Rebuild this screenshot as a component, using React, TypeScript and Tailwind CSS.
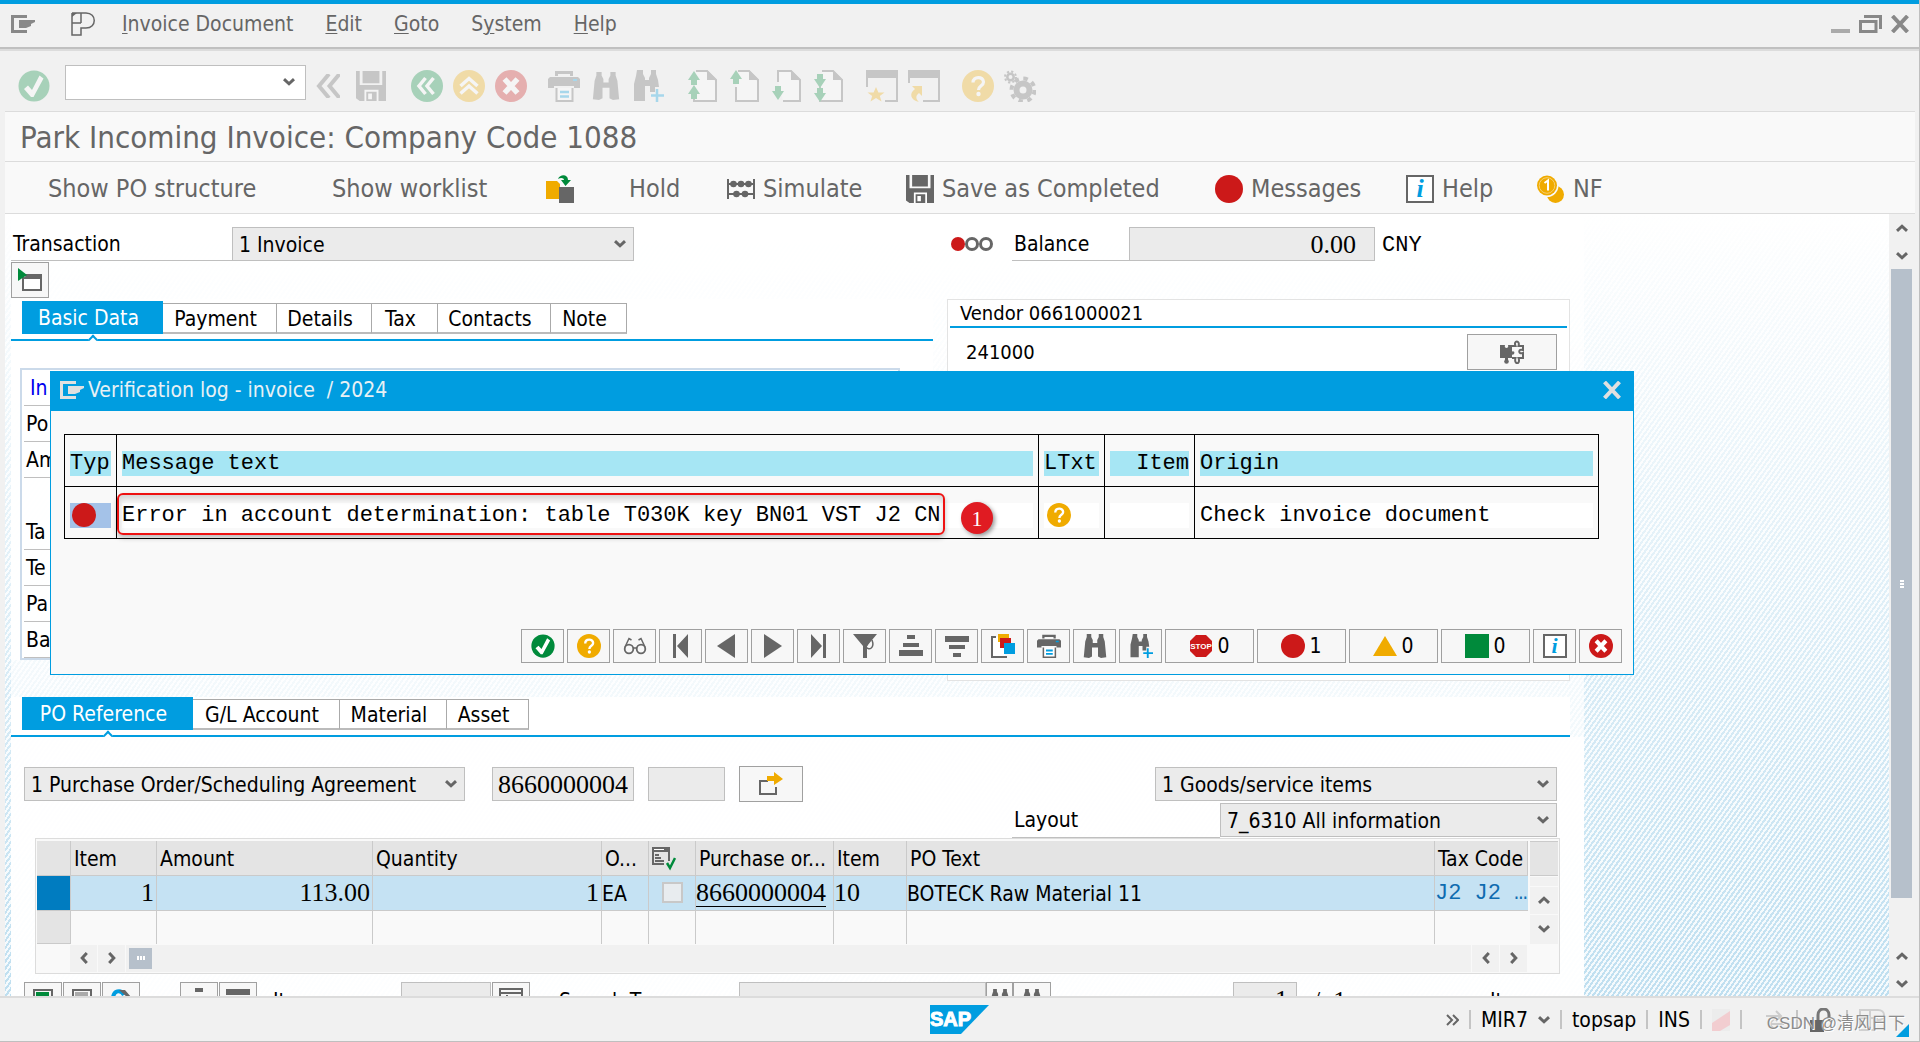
import React from "react";

const SANS = "font-['DejaVu_Sans_Condensed','Noto_Sans',sans-serif]";
const MONO = "font-['Liberation_Mono',monospace]";
const NUM = "font-['Liberation_Serif',serif]";

type IconProps = { className?: string };

function Svg({ className = "size-8", children, box = "0 0 32 32" }: IconProps & { children: React.ReactNode; box?: string }) {
  return (
    <svg viewBox={box} className={`shrink-0 ${className}`} fill="none" aria-hidden="true">
      {children}
    </svg>
  );
}

const G = "#666666";
const GREEN = "#008a3b";
const YELLOW = "#f0ab00";
const RED = "#cc1919";
const BLUE = "#009de0";

const SystemIcon = ({ color, className = "w-6 h-[18px]" }: IconProps & { color: string }) => (
  <Svg className={className} box="0 0 24 18">
    <path d="M16 1.5H1.5V16.5H16" stroke={color} strokeWidth="3" />
    <path d="M8 5H24V7L20 9V11L15 13H8Z" fill={color} />
  </Svg>
);
const PersonasIcon = () => (
  <Svg className="w-6 h-6" box="0 0 24 24">
    <path d="M1 1H15C26 1 26 16 15 16H10V23H1V1M10 1V11M1 11H10" stroke={G} strokeWidth="1.5" />
    <path d="M1 1H6L1 5Z" fill={G} />
  </Svg>
);
const CheckCircle = (p: IconProps) => (
  <Svg {...p}>
    <circle cx="16" cy="16" r="15.5" fill={GREEN} />
    <path d="M6 19L10 15.5L14 20L21.5 5.5L25.5 8.5L15.5 27H13Z" fill="#fff" />
  </Svg>
);
const DoubleLeft = () => (
  <Svg className="w-6 h-6" box="0 0 24 24">
    <path d="M13 0L3 12L13 24M23.5 0L13.5 12L23.5 24" stroke={G} strokeWidth="4" />
  </Svg>
);
const SaveIcon = (p: IconProps) => (
  <Svg {...p}>
    <path d="M0 0H4V15H28V0H32V32H4L0 29ZM7 0H25V13H7Z" fill={G} />
    <path d="M9 20H24V32H9Z" fill="#fff" />
    <path d="M11 22H22V32H11ZM13 24V30H17V24Z" fill={G} fillRule="evenodd" />
  </Svg>
);
const BackCircle = () => (
  <Svg>
    <circle cx="16" cy="16" r="16" fill={GREEN} />
    <path d="M14.5 8L8 16L14.5 24M22.5 8L16 16L22.5 24" stroke="#fff" strokeWidth="3.5" />
  </Svg>
);
const UpCircle = () => (
  <Svg>
    <circle cx="16" cy="16" r="16" fill={YELLOW} />
    <path d="M7.5 16L16 8.5L24.5 16M7.5 23.5L16 16L24.5 23.5" stroke="#fff" strokeWidth="3.5" />
  </Svg>
);
const CancelCircle = (p: IconProps) => (
  <Svg {...p}>
    <circle cx="16" cy="16" r="16" fill={RED} />
    <path d="M9.5 9L22.5 23M22.5 9L9.5 23" stroke="#fff" strokeWidth="5.5" />
  </Svg>
);
const PrinterIcon = (p: IconProps) => (
  <Svg {...p}>
    <path d="M7 6V1H25V6H22V4H10V6Z" fill={G} />
    <path d="M2 7H30L32 9V18H26V16H6V18H0V9Z" fill={G} />
    <rect x="25" y="9" width="4" height="2" fill={BLUE} />
    <path d="M8.500 18V31H24.500V18" stroke={G} strokeWidth="2" fill="#fff" />
    <path d="M12 22H21M12 26.500H21" stroke={BLUE} strokeWidth="2.500" />
  </Svg>
);
const Binoculars = (p: IconProps) => (
  <Svg {...p}>
    <path d="M5 0H11V4L13 8V12H19V8L21 4V0H27V4L29 10L31 31L24 32L20 30V18H12V30L8 32L1 31L3 10L5 4Z" fill={G} />
  </Svg>
);
const BinocularsPlus = (p: IconProps) => (
  <Svg {...p}>
    <path d="M5 0H11V4L13 8V10H17V8L19 4V0H24V4L26 10L27 17H23V22H18V16H13V31H2V14L4 6Z" fill={G} />
    <path d="M25 19V32M19 25.500H32" stroke={BLUE} strokeWidth="2.500" />
  </Svg>
);
const UP = "M6 0L12 9H9V14H3V9H0Z";
const DOWN = "M3 0H9V5H12L6 14L0 5H3Z";
const PageOutline = () => (
  <>
    <path d="M9 1H20L29 10V31H7V17" stroke={G} strokeWidth="2" fill="#fff" />
    <path d="M20 0V10H30Z" fill={G} />
  </>
);
const PageFirst = () => (
  <Svg>
    <PageOutline />
    <path d={UP} transform="translate(1 1)" fill={GREEN} />
    <path d={UP} transform="translate(1 15)" fill={GREEN} />
  </Svg>
);
const PagePrev = () => (
  <Svg>
    <PageOutline />
    <path d={UP} transform="translate(1 0)" fill={GREEN} />
  </Svg>
);
const PageNext = () => (
  <Svg>
    <path d="M7 12V1H20L29 10V31H12" stroke={G} strokeWidth="2" fill="#fff" />
    <path d="M20 0V10H30Z" fill={G} />
    <path d={DOWN} transform="translate(1 16)" fill={GREEN} />
  </Svg>
);
const PageLast = () => (
  <Svg>
    <PageOutline />
    <path d={DOWN} transform="translate(1 4)" fill={GREEN} />
    <path d={DOWN} transform="translate(1 18)" fill={GREEN} />
  </Svg>
);
const NewSession = () => (
  <Svg>
    <path d="M0 0H32V32H19V30H30V8H2V17H0Z" fill={G} />
    <path d="M10 17L12.400 22.500H18.500L13.800 26L15.500 31.500L10 28L4.500 31.500L6.200 26L1.500 22.500H7.600Z" fill={YELLOW} />
  </Svg>
);
const Shortcut = () => (
  <Svg>
    <path d="M0 0H32V32H15V30H30V8H2V13H0Z" fill={G} />
    <path d="M4 16H14V26L11 23C7 26 8 29 11 32C2 30 1 23 7 19Z" fill={YELLOW} />
  </Svg>
);
const HelpCircle = (p: IconProps) => (
  <Svg {...p}>
    <circle cx="16" cy="16" r="16" fill={YELLOW} />
    <path d="M11 12.500C11 6 21.500 6 21.500 12C21.500 16 16.500 15.500 16.500 20" stroke="#fff" strokeWidth="3.200" />
    <circle cx="16.500" cy="24" r="2.200" fill="#fff" />
  </Svg>
);
const GearIcon = () => (
  <Svg>
    <circle cx="19" cy="20" r="6.500" stroke={G} strokeWidth="6" />
    <circle cx="19" cy="20" r="11.500" stroke={G} strokeWidth="4" strokeDasharray="4.515 4.515" />
    <circle cx="6.500" cy="7" r="3.200" stroke={G} strokeWidth="2.500" />
    <circle cx="6.500" cy="7" r="5.500" stroke={G} strokeWidth="2" strokeDasharray="2.160 2.160" />
  </Svg>
);
const OtherDocIcon = () => (
  <Svg className="size-7" box="0 0 28 28">
    <path d="M0 6H11L14 9V24H0Z" fill={YELLOW} />
    <path d="M13 12H28V28H13Z" fill={G} />
    <path d="M12 4C14 -1 22 -1 22 5H25L19.500 11L15 5H18C18 3 15 2 12 4Z" fill={GREEN} />
  </Svg>
);
const AbacusIcon = () => (
  <Svg className="size-7" box="0 0 28 28">
    <path d="M1 4V24M27 4V24M0 9H28M0 19H28" stroke={G} strokeWidth="2" />
    <g fill={G}>
      <circle cx="6.500" cy="9" r="3.300" /><circle cx="14" cy="9" r="3.300" /><circle cx="21.500" cy="9" r="3.300" />
      <circle cx="9.500" cy="19" r="3.300" /><circle cx="18" cy="19" r="3.300" />
    </g>
  </Svg>
);
const Dot = ({ className = "size-7" }: IconProps) => <span className={`shrink-0 rounded-full bg-[#cc1919] ${className}`} />;
const InfoIcon = ({ className = "size-7 text-[26px]" }: IconProps) => (
  <span className={`flex shrink-0 items-center justify-center border-2 border-[#666666] bg-white font-['Liberation_Serif',serif] leading-none font-bold text-[#009de0] italic ${className}`}>
    i
  </span>
);
const CoinIcon = () => (
  <Svg className="size-7" box="0 0 28 28">
    <circle cx="18.500" cy="19.500" r="8.500" fill={YELLOW} />
    <circle cx="10" cy="10.500" r="11.500" fill="#f9f9f9" />
    <circle cx="10" cy="10.500" r="10" fill={YELLOW} />
    <circle cx="10" cy="10.500" r="7.800" stroke="#f6cf70" strokeWidth="1" />
    <path d="M7.500 8L11 5.500V15.500" stroke="#fff" strokeWidth="2" />
  </Svg>
);
const ChevronDown = ({ className = "w-3 h-2" }: IconProps) => (
  <Svg className={className} box="0 0 12 8">
    <path d="M1 1.200L6 5.800L11 1.200" stroke={G} strokeWidth="3" />
  </Svg>
);
const ChevronUp = () => <ChevronDown className="w-3 h-2 rotate-180" />;
const ChevronLeft = () => <ChevronDown className="w-3 h-2 rotate-90" />;
const ChevronRight = () => <ChevronDown className="w-3 h-2 -rotate-90" />;

const ExecuteWindow = () => (
  <Svg className="size-6" box="0 0 24 24">
    <path d="M5 7H23V22H5Z" stroke={G} strokeWidth="2" fill="#fff" />
    <path d="M10 6H24V11H4Z" fill={G} />
    <path d="M0 0L9 7L0 13Z" fill={GREEN} />
  </Svg>
);
const PuzzleIcon = () => (
  <Svg className="size-6" box="0 0 24 24">
    <path d="M0 5H5C3.500 9 9.500 9 8 5H12V18H8V21H5V18H0Z" fill={G} />
    <circle cx="6.500" cy="21.500" r="2.300" fill={G} />
    <path d="M11 14C15 17 16 9 11 12Z" fill={G} />
    <path d="M12 6H15.500C13 0 20.500 0 18.500 6H23V10C18 8 18 15 23 13V18H18.500C21 25 13.500 25 15.500 18H12" stroke={G} strokeWidth="2" />
  </Svg>
);
const ExportIcon = () => (
  <Svg className="size-6" box="0 0 24 24">
    <path d="M9 9H1V22H17V15" stroke={G} strokeWidth="2" />
    <path d="M8 4H15V0L24 7L15 13V9H8Z" fill={YELLOW} />
  </Svg>
);
const Glasses = () => (
  <Svg className="size-6" box="0 0 24 24">
    <circle cx="6" cy="15" r="4.300" stroke={G} strokeWidth="1.800" />
    <circle cx="18" cy="15" r="4.300" stroke={G} strokeWidth="1.800" />
    <path d="M10 14H14M2 13L6 4.500L8.500 6M22 13L18 4.500L15.500 6" stroke={G} strokeWidth="1.500" />
  </Svg>
);
const First = () => (
  <Svg className="size-6" box="0 0 24 24"><path d="M4 0H7V24H4ZM8 12L19 0V24Z" fill={G} /></Svg>
);
const Prev = () => (
  <Svg className="size-6" box="0 0 24 24"><path d="M2 12L20 0V24Z" fill={G} /></Svg>
);
const Next = () => (
  <Svg className="size-6" box="0 0 24 24"><path d="M21 12L3 0V24Z" fill={G} /></Svg>
);
const Last = () => (
  <Svg className="size-6" box="0 0 24 24"><path d="M16 0H19V24H16ZM15 12L4 0V24Z" fill={G} /></Svg>
);
const FilterIcon = () => (
  <Svg className="size-6" box="0 0 24 24">
    <path d="M0 0H24L14 12V24H10V12Z" fill={G} />
    <path d="M19 6C22 14 16 17 13 13L15 9" stroke={G} strokeWidth="1.500" />
  </Svg>
);
const SortAsc = () => (
  <Svg className="size-6" box="0 0 24 24"><path d="M8 1H16V5H8ZM4 9H20V13H4ZM0 16H24V22H0Z" fill={G} /></Svg>
);
const SortDesc = () => (
  <Svg className="size-6" box="0 0 24 24"><path d="M0 2H24V8H0ZM4 11H20V15H4ZM8 19H16V23H8Z" fill={G} /></Svg>
);
const StackIcon = () => (
  <Svg className="size-6" box="0 0 24 24">
    <path d="M1 3H14V23H1Z" fill="#fff" />
    <path d="M5 3H1V23H16" stroke={G} strokeWidth="2" />
    <path d="M7 0H18V8H7Z" fill={YELLOW} />
    <path d="M9 4H20V14H9Z" fill={RED} />
    <path d="M13 9H24V20H13Z" fill={BLUE} />
  </Svg>
);
const StopIcon = () => (
  <Svg className="size-6" box="0 0 24 24">
    <path d="M7 1H17L23 7V17L17 23H7L1 17V7Z" fill={RED} />
    <text x="12" y="15" textAnchor="middle" fontSize="8" fontWeight="bold" fontFamily="Liberation Sans" fill="#fff">STOP</text>
  </Svg>
);
const ChecklistIcon = () => (
  <Svg className="size-6" box="0 0 24 24">
    <path d="M0 0H18V14H16V5H2V16H12V18H0Z" fill={G} />
    <path d="M3 8H7M3 11H9M3 14H12" stroke={G} strokeWidth="2" />
    <path d="M2 2.500H12" stroke="#fff" />
    <path d="M15 16L18 21L23 11" stroke={GREEN} strokeWidth="2.500" />
  </Svg>
);

function Select({ id, value, className, label }: { id: string; value: string; className: string; label?: string }) {
  return (
    <span className={`relative flex h-[34px] ${className}`}>
      <select id={id} aria-label={label} className="h-full w-full appearance-none border border-[#bfbfbf] bg-[#ebebeb] pt-0.5 pl-[6px] outline-none">
        <option>{value}</option>
      </select>
      <span className="pointer-events-none absolute inset-y-0 right-2 flex items-center">
        <ChevronDown />
      </span>
    </span>
  );
}

function Tabs({ tabs }: { tabs: { name: string; width: string }[] }) {
  return (
    <div role="tablist" className="flex h-[40px] items-start border-b-2 border-[#009de0] pl-[11px]">
      {tabs.map((t, i) =>
        i === 0 ? (
          <button key={t.name} role="tab" aria-selected="true" className={`relative h-[33px] bg-[#009de0] pt-0.5 pr-2 text-white ${t.width}`}>
            {t.name}
            <span className="absolute -bottom-[9px] left-1/2 size-[7px] -translate-x-1/2 rotate-45 border-t-2 border-l-2 border-[#009de0] bg-white" />
          </button>
        ) : (
          <button key={t.name} role="tab" aria-selected="false" className={`mt-0.5 h-[31px] border-t border-r border-b-2 border-t-[#aaa] border-r-[#aaa] border-b-[#bbb] bg-white pr-2 ${t.width}`}>
            {t.name}
          </button>
        ),
      )}
    </div>
  );
}

const boxBtn = "flex shrink-0 items-center justify-center border border-[#a0a0a0] bg-[#f7f7f7]";

function MenuBar() {
  const items: [string, string, string][] = [["", "I", "nvoice Document"], ["", "E", "dit"], ["", "G", "oto"], ["S", "y", "stem"], ["", "H", "elp"]];
  return (
    <header className="flex h-[49px] items-center border-t-4 border-b-2 border-t-[#009de0] border-b-[#c0c0c0] pr-[10px] pb-1 pl-[11px] text-[#666] shadow-[0_2px_0_#dcdcdc]">
      <button aria-label="System menu"><SystemIcon color="#888" /></button>
      <div className="ml-9"><PersonasIcon /></div>
      <nav className="ml-[27px] flex flex-1 gap-8 pt-[3px]">
        {items.map(([a, b, c]) => (
          <button key={c}>{a}<span className="underline decoration-1 underline-offset-2">{b}</span>{c}</button>
        ))}
      </nav>
      <div className="flex items-end gap-[9px]">
        <button aria-label="Minimize" className="h-1 w-[19px] bg-[#aaa]" />
        <button aria-label="Restore">
          <Svg className="h-[18px] w-[23px]" box="0 0 23 18">
            <path d="M5 1.500H21.500V14M1.500 6.500H17V16.500H1.500Z" stroke="#888" strokeWidth="3" />
          </Svg>
        </button>
        <button aria-label="Close">
          <Svg className="size-[18px]" box="0 0 18 18"><path d="M1.500 1L16.500 17M16.500 1L1.500 17" stroke="#888" strokeWidth="4" /></Svg>
        </button>
      </div>
    </header>
  );
}

function Toolbar() {
  const groups: { ml: string; icons: [string, React.ReactNode][] }[] = [
    { ml: "ml-[25px]", icons: [["Back", <BackCircle />], ["Exit", <UpCircle />], ["Cancel", <CancelCircle />]] },
    { ml: "ml-[21px]", icons: [["Print", <PrinterIcon />], ["Find", <Binoculars className="h-8 w-7" />], ["Find next", <BinocularsPlus />]] },
    { ml: "ml-[23px]", icons: [["First page", <PageFirst />], ["Previous page", <PagePrev />], ["Next page", <PageNext />], ["Last page", <PageLast />]] },
    { ml: "ml-[21px]", icons: [["New session", <NewSession />], ["Create shortcut", <Shortcut />]] },
    { ml: "ml-[22px]", icons: [["Help", <HelpCircle />], ["Settings", <GearIcon />]] },
  ];
  return (
    <div className="flex h-[63px] shrink-0 items-center border-b border-[#dcdcdc] pt-2 pl-[13px]">
      <button aria-label="Enter" className="mt-1 mr-[15px] opacity-30"><CheckCircle /></button>
      <span className="relative -mt-1">
        <input aria-label="Command field" className="h-[35px] w-[241px] border border-[#bfbfbf] bg-white px-2 outline-none" />
        <span className="absolute inset-y-0 right-[11px] flex items-center"><ChevronDown /></span>
      </span>
      <div className="mt-1 ml-[10px] flex items-center opacity-30">
        <button aria-label="Hide"><DoubleLeft /></button>
        <button aria-label="Save" className="ml-4"><SaveIcon className="size-[30px]" /></button>
        {groups.map((g) => (
          <div key={g.icons[0][0]} className={`flex gap-[10px] ${g.ml}`}>
            {g.icons.map(([n, icon]) => <button key={n} aria-label={n} className="flex w-8 justify-center">{icon}</button>)}
          </div>
        ))}
      </div>
    </div>
  );
}

function AppToolbar() {
  const b = "flex items-center gap-2 whitespace-nowrap";
  return (
    <div className="flex h-[52px] shrink-0 items-center border-b border-[#dcdcdc] bg-[#f9f9f9] pt-0.5 pl-[43px] text-[25px] text-[#666]">
      <button className={`${b} w-[284px]`}>Show PO structure</button>
      <button className={`${b} w-[214px]`}>Show worklist</button>
      <button aria-label="Other invoice document" className="w-[83px]"><OtherDocIcon /></button>
      <button className={`${b} w-[98px]`}>Hold</button>
      <button className={`${b} w-[179px]`}><AbacusIcon />Simulate</button>
      <button className={`${b} w-[309px]`}><SaveIcon className="size-7" />Save as Completed</button>
      <button className={`${b} w-[191px]`}><Dot />Messages</button>
      <button className={`${b} w-[131px]`}><InfoIcon />Help</button>
      <button className={b}><CoinIcon />NF</button>
    </div>
  );
}

function VerificationDialog() {
  const tools: [string, React.ReactNode][] = [
    ["Continue", <CheckCircle className="size-6" />], ["Help", <HelpCircle className="size-6" />], ["Display", <Glasses />],
    ["First", <First />], ["Previous", <Prev />], ["Next", <Next />], ["Last", <Last />], ["Filter", <FilterIcon />],
    ["Sort ascending", <SortAsc />], ["Sort descending", <SortDesc />], ["Layouts", <StackIcon />],
    ["Print", <PrinterIcon className="size-6" />], ["Find", <Binoculars className="size-6" />], ["Find next", <BinocularsPlus className="size-6" />],
  ];
  const counts: [string, string, React.ReactNode][] = [
    ["Stop", "0", <StopIcon />],
    ["Errors", "1", <Dot className="size-6" />],
    ["Warnings", "0", <Svg className="size-6" box="0 0 24 24"><path d="M12 2L24 22H0Z" fill={YELLOW} /></Svg>],
    ["Successes", "0", <span className="size-6 bg-[#008a3b]" />],
  ];
  const th = "border border-black p-0 px-[5px] pt-[5px] text-left font-normal align-middle";
  const hd = "block h-[25px] bg-[#a6e6f4] leading-[26px]";
  return (
    <section role="dialog" aria-label="Verification log" className="absolute top-[157px] left-[45px] flex h-[304px] w-[1584px] flex-col border border-[#009de0] bg-[#f9f9f9]">
      <div className="flex h-[39px] shrink-0 items-center bg-[#009de0] pr-3 pb-[3px] pl-[9px] text-[#e8f1f5]">
        <SystemIcon color="#e0e0e0" />
        <h2 className="ml-1 flex-1 pt-0.5 whitespace-pre">{"Verification log - invoice  / 2024"}</h2>
        <button aria-label="Close dialog">
          <Svg className="size-[18px]" box="0 0 18 18"><path d="M1.500 1L16.500 17M16.500 1L1.500 17" stroke="#e0e0e0" strokeWidth="4" /></Svg>
        </button>
      </div>
      <div className="relative mt-[23px] ml-[13px] w-[1535px]">
        <table className={`h-[105px] w-full table-fixed border-collapse text-[22px] ${MONO}`}>
          <colgroup>
            <col className="w-[52px]" /><col className="w-[922px]" /><col className="w-[66px]" /><col className="w-[90px]" /><col />
          </colgroup>
          <thead>
            <tr className="h-[52px]">
              <th className={th}><span className={hd}>Typ</span></th>
              <th className={th}><span className={hd}>Message text</span></th>
              <th className={th}><span className={hd}>LTxt</span></th>
              <th className={th}><span className={`${hd} text-right`}>Item</span></th>
              <th className={th}><span className={hd}>Origin</span></th>
            </tr>
          </thead>
          <tbody>
            <tr className="h-[52px]">
              <td className={th}><span className="flex h-[25px] items-center bg-[#a4c2e8] pl-0.5"><Dot className="size-6" /></span></td>
              <td className={th}><span className="block h-[25px] bg-white leading-[26px] whitespace-nowrap">Error in account determination: table T030K key BN01 VST J2 CN</span></td>
              <td className={th}><button aria-label="Long text" className="flex h-[25px] w-full items-center bg-white px-[3px]"><HelpCircle className="size-6" /></button></td>
              <td className={th}><span className="block h-[25px] bg-white" /></td>
              <td className={th}><span className="block h-[25px] bg-white leading-[26px]">Check invoice document</span></td>
            </tr>
          </tbody>
        </table>
        <div className="absolute top-[59px] left-[53px] h-[42px] w-[828px] rounded-md border-2 border-[#ee1111] shadow-[0_3px_5px_rgba(0,0,0,0.25),inset_0_4px_6px_rgba(0,0,0,0.15)]" />
        <span className={`absolute top-[68px] left-[897px] flex size-8 items-center justify-center rounded-full bg-[#e01b22] text-[22px] text-white shadow-[2px_2px_4px_rgba(0,0,0,0.4)] ${NUM}`}>1</span>
      </div>
      <div className="mt-auto mr-[11px] mb-[11px] flex justify-end gap-[3px]">
        {tools.map(([n, icon]) => <button key={n} aria-label={n} className={`${boxBtn} h-[34px] w-[43px]`}>{icon}</button>)}
        {counts.map(([n, c, icon]) => <button key={n} aria-label={`${n} ${c}`} className={`${boxBtn} h-[34px] w-[89px] gap-1`}>{icon}<span className="pt-0.5">{c}</span></button>)}
        <button aria-label="Information" className={`${boxBtn} h-[34px] w-[43px]`}><InfoIcon className="size-6 text-[22px]" /></button>
        <button aria-label="Cancel dialog" className={`${boxBtn} h-[34px] w-[43px]`}><CancelCircle className="size-6" /></button>
      </div>
    </section>
  );
}

function HeaderArea() {
  const rows = ["In", "Po", "Am", "", "Ta", "Te", "Pa", "Ba"];
  return (
    <>
      <div className="flex h-[34px] items-stretch">
        <label htmlFor="transaction" className="flex w-[221px] items-center border-b border-[#bfbfbf] pt-0.5 pl-0.5">Transaction</label>
        <Select id="transaction" value="1 Invoice" className="w-[402px]" />
        <span className="ml-[317px] flex w-[61px] items-center">
          <span className="size-[14px] rounded-full bg-[#cc1919]" />
          <span className="size-[14px] rounded-full border-3 border-[#666]" />
          <span className="size-[14px] rounded-full border-3 border-[#666]" />
        </span>
        <label htmlFor="balance" className="flex w-[117px] items-center border-b border-[#bfbfbf] pt-0.5 pl-0.5">Balance</label>
        <input id="balance" readOnly value="0.00" className={`w-[246px] border border-[#bfbfbf] bg-[#ebebeb] pr-[18px] text-right text-[26px] outline-none ${NUM}`} />
        <span className={`ml-[7px] flex items-center pt-0.5 text-[22px] ${MONO}`}>CNY</span>
      </div>
      <button aria-label="Show PO structure panel" className={`${boxBtn} mt-px h-9 w-[38px]`}><ExecuteWindow /></button>
      <div className="mt-px flex items-start pr-[14px]">
        <div className="w-[922px] bg-white/90 pt-0.5">
          <Tabs tabs={[{ name: "Basic Data", width: "w-[141px]" }, { name: "Payment", width: "w-[114px]" }, { name: "Details", width: "w-[95px]" }, { name: "Tax", width: "w-[66px]" }, { name: "Contacts", width: "w-[113px]" }, { name: "Note", width: "w-[76px]" }]} />
          <div className="mt-[27px] ml-[9px] w-[880px] border-2 border-[#cbdaea] px-[2px]">
            {rows.map((r, i) => (
              <div key={i} className={`flex h-9 w-[160px] items-center border-b pt-[3px] ${i === 0 ? "pl-1.5 text-[#0000ee]" : "pl-0.5"} ${r === "" ? "border-transparent" : "border-[#bfbfbf]"}`}>{r}</div>
            ))}
          </div>
        </div>
        <section className="ml-[14px] h-[382px] flex-1 border border-[#e3e3e3] bg-white px-0.5 text-[20px]">
          <h2 className="flex h-7 items-center border-b-2 border-[#009de0] pl-[10px]">Vendor 0661000021</h2>
          <div className="mt-[6px] flex items-center justify-between pr-[10px] pl-4">
            241000
            <button aria-label="Services for vendor" className={`${boxBtn} h-9 w-[90px]`}><PuzzleIcon /></button>
          </div>
        </section>
      </div>
    </>
  );
}

const navCell = "flex items-center justify-center bg-[#f1f1f1]";

function ItemTable() {
  const c = "overflow-hidden border-r border-[#cacaca] p-0 text-left font-normal whitespace-nowrap";
  return (
    <div className="ml-6 flex w-[1525px] flex-col border border-[#dcdcdc] bg-[#f9f9f9] px-px pt-0.5 pb-px">
      <div className="flex">
        <table className="w-[1491px] table-fixed border-separate border-spacing-0">
          <colgroup>
            <col className="w-[34px]" /><col className="w-[86px]" /><col className="w-[216px]" /><col className="w-[229px]" /><col className="w-[47px]" />
            <col className="w-[47px]" /><col className="w-[138px]" /><col className="w-[73px]" /><col className="w-[528px]" /><col />
          </colgroup>
          <thead>
            <tr className="h-[35px] bg-[#e4e4e4] leading-7 [&>th]:border-b [&>th]:pt-[3px] [&>th]:pl-[3px]">
              <th aria-label="Select" className={c} /><th className={c}>Item</th><th className={c}>Amount</th><th className={c}>Quantity</th>
              <th className={c}>O...</th><th aria-label="Status" className={c}><ChecklistIcon /></th><th className={c}>Purchase or...</th><th className={c}>Item</th>
              <th className={c}>PO Text</th><th className={c}>Tax Code</th>
            </tr>
          </thead>
          <tbody>
            <tr className="h-[35px] bg-[#c5e2f3] leading-[30px] [&>td]:border-b">
              <td className={`${c} bg-[#007cc0]`} />
              <td className={`${c} pr-[2px] text-right text-[26px] ${NUM}`}>1</td>
              <td className={`${c} pr-[2px] text-right text-[26px] ${NUM}`}>113.00</td>
              <td className={`${c} pr-[2px] text-right text-[26px] ${NUM}`}>1</td>
              <td className={`${c} pt-0.5`}>EA</td>
              <td className={c}><input type="checkbox" aria-label="Item ok" className="mx-auto block size-[21px] appearance-none border-2 border-[#c8c8c8] bg-[#e8ecef]" /></td>
              <td className={`${c} text-[26px] ${NUM}`}><a href="#po" className="inline-block border-b border-black leading-[26px]">8660000004</a></td>
              <td className={`${c} text-[26px] ${NUM}`}>10</td>
              <td className={`${c} pt-0.5`}>BOTECK Raw Material 11</td>
              <td className={`${c} border-r-0 pt-0.5 text-[22px] text-[#0f6cb0] ${MONO}`}>J2 J2 …</td>
            </tr>
            <tr className="h-[33px]">
              <td className={`${c} border-b bg-[#e4e4e4]`} />
              {Array.from({ length: 9 }, (_, i) => <td key={i} className={`${c} last:border-r-0`} />)}
            </tr>
          </tbody>
        </table>
        <div className="ml-0.5 flex flex-1 flex-col gap-px">
          <div className="h-[35px] border-y border-[#cacaca] bg-[#e4e4e4]" />
          <div className="h-[9px] bg-[#f1f1f1]" />
          <button aria-label="Row up" className={`${navCell} h-[27px]`}><ChevronUp /></button>
          <button aria-label="Row down" className={`${navCell} flex-1`}><ChevronDown /></button>
        </div>
      </div>
      <div className="mt-px mr-[31px] ml-[33px] flex h-[27px] items-stretch bg-[#f1f1f1]">
        <button aria-label="Scroll left" className="flex w-7 items-center justify-center border-r border-[#f9f9f9]"><ChevronLeft /></button>
        <button aria-label="Scroll right" className="flex w-7 items-center justify-center border-r border-[#f9f9f9]"><ChevronRight /></button>
        <span className="my-[3px] ml-[3px] flex w-[23px] items-center justify-center gap-px bg-[#b6c0cb]">
          <span className="h-1 w-0.5 bg-white" /><span className="h-1 w-0.5 bg-white" /><span className="h-1 w-0.5 bg-white" />
        </span>
        <span className="flex-1" />
        <button aria-label="Columns left" className="flex w-7 items-center justify-center border-l border-[#f9f9f9]"><ChevronLeft /></button>
        <button aria-label="Columns right" className="flex w-7 items-center justify-center border-l border-[#f9f9f9]"><ChevronRight /></button>
      </div>
    </div>
  );
}

function ItemToolbar() {
  const b = `${boxBtn} h-[34px] w-[38px]`;
  const field = "h-[34px] border border-[#bfbfbf] bg-[#ebebeb]";
  const doc = (fill: string) => (
    <Svg className="size-5" box="0 0 20 20"><path d="M1 1H19V19H1Z" stroke={G} strokeWidth="2" /><path d="M3 3H16V8H3Z" fill={fill} /></Svg>
  );
  return (
    <div className="mt-2 ml-[13px] flex items-start">
      <button aria-label="Item detail" className={b}>{doc(GREEN)}</button>
      <button aria-label="Item list" className={`${b} ml-px`}>{doc("#aaa")}</button>
      <button aria-label="Refresh" className={`${b} ml-px`}>
        <Svg className="size-5" box="0 0 20 20"><path d="M2 10C2 1 10 0 13 6" stroke={BLUE} strokeWidth="4" /><path d="M8 1H14L20 8V18H16V8Z" fill={G} /></Svg>
      </button>
      <button aria-label="Sort items ascending" className={`${b} ml-[40px]`}><SortAsc /></button>
      <button aria-label="Sort items descending" className={`${b} ml-px`}><SortDesc /></button>
      <label htmlFor="item-field" className="ml-4 w-[128px] pt-1">Item</label>
      <input id="item-field" className={`${field} w-[90px]`} />
      <button aria-label="Choose item" className={`${b} ml-px`}>
        <Svg className="size-6" box="0 0 24 24"><path d="M1 2H23V22H1Z M1 6H23M4 11H11M14 11H20M8 8V14" stroke={G} strokeWidth="2" /></Svg>
      </button>
      <label htmlFor="search-field" className="ml-[29px] w-[180px] pt-1">Search Term</label>
      <input id="search-field" className={`${field} w-[247px]`} />
      <button aria-label="Search item" className={`${boxBtn} h-[34px] w-[27px] overflow-hidden`}><Binoculars className="size-5" /></button>
      <button aria-label="Search next item" className={b}><Binoculars className="size-5" /></button>
      <input aria-label="Current item" readOnly value="1" className={`${field} ml-[182px] w-[64px] pt-0.5 pr-2 text-right text-[26px] leading-none ${NUM}`} />
      <span className={`ml-4 w-[177px] pt-1.5 text-[26px] leading-none whitespace-pre ${NUM}`}>{"/  1"}</span>
      <span className="pt-1">Item</span>
    </div>
  );
}

function StatusBar() {
  const sep = <span className="h-[19px] w-0.5 bg-[#c4c4c4]" />;
  return (
    <footer className="relative flex h-[46px] shrink-0 items-center border-t-2 border-b border-t-[#dcdcdc] border-b-[#bfbfbf]">
      <div className="flex-1" />
      <Svg className="h-[29px] w-[59px]" box="0 0 59 29">
        <path d="M0 0H59L31 29H0Z" fill={BLUE} />
        <text x="0" y="21" fontSize="20" fontWeight="bold" fontFamily="Liberation Sans" stroke="#fff" fill="#fff">SAP</text>
      </Svg>
      <div className="flex flex-1 items-center justify-end gap-[10px]">
        <Svg className="h-3 w-[13px]" box="0 0 13 12"><path d="M1 1L6 6L1 11M7 1L12 6L7 11" stroke={G} strokeWidth="2" /></Svg>
        {sep}
        <span className="pt-0.5">MIR7</span>
        <button aria-label="Transaction list"><ChevronDown /></button>
        {sep}<span className="pt-0.5">topsap</span>{sep}<span className="pt-0.5">INS</span>{sep}
        <Svg className="h-[22px] w-[18px]" box="0 0 18 22"><path d="M0 0H18V22H0Z" fill="#ececec" /><path d="M18 2V16L8 22H0V14Z" fill="#f2cdd0" /></Svg>
        {sep}
        <Svg className="ml-2.5 h-5 w-6" box="0 0 24 20"><path d="M4 6H18M14 1L19 6L14 11M22 14H8M12 9L7 14L12 19" stroke="#ccc" strokeWidth="2" /></Svg>
        {sep}
        <Svg className="h-6 w-7" box="0 0 28 24"><path d="M10 12V7C10 -1 21 -1 21 7V12" stroke="#777" strokeWidth="3" /><path d="M2 12H16V24H2Z" fill={G} /></Svg>
        {sep}
        <Svg className="mr-[33px] h-6 w-7" box="0 0 28 24"><path d="M2 2H20C28 2 28 12 20 12H16V22H2ZM2 10H20M12 2V22" stroke="#d0d0d0" strokeWidth="2" /></Svg>
      </div>
      <span className="absolute right-[14px] bottom-[5px] font-['Liberation_Sans','Noto_Sans_CJK_SC',sans-serif] text-[17px] text-[#8c8c8c] [text-shadow:1px_1px_0_#fff]">CSDN @清风日下</span>
      <Svg className="absolute right-[10px] bottom-[4px] size-[13px]" box="0 0 13 13"><path d="M13 0V13H0Z" fill={BLUE} /></Svg>
    </footer>
  );
}

export default function App() {
  return (
    <div className={`flex h-screen flex-col overflow-hidden border-r border-[#bfbfbf] bg-[#f1f1f1] text-[21px] leading-normal text-black ${SANS}`}>
      <MenuBar />
      <div className="flex min-h-0 flex-1 flex-col pr-1 pl-[5px]">
        <Toolbar />
        <h1 className="flex h-[50px] shrink-0 items-center border-b border-[#dcdcdc] bg-[#f9f9f9] pt-px pl-[15px] text-[31px] leading-none text-[#666]">Park Incoming Invoice: Company Code 1088</h1>
        <AppToolbar />
        <div className="flex min-h-0 flex-1">
          <main className="relative min-w-0 flex-1 overflow-hidden bg-[linear-gradient(to_bottom,white,rgba(255,255,255,0)),repeating-linear-gradient(125deg,#bfdff0_0px,#bfdff0_2px,#f4fafd_2px,#f4fafd_4px)] pl-[6px]">
            <div className="mr-[305px] bg-white/70 pt-[13px]">
              <HeaderArea />
              <section className="mt-4 mr-[14px] bg-white">
                <Tabs tabs={[{ name: "PO Reference", width: "w-[171px]" }, { name: "G/L Account", width: "w-[147px]" }, { name: "Material", width: "w-[107px]" }, { name: "Asset", width: "w-[82px]" }]} />
              </section>
              <section className="bg-white/90 pt-[29px] pb-10">
                <div className="flex items-center pr-[27px] pl-[13px]">
                  <Select id="ref-doc" label="Reference document category" value="1 Purchase Order/Scheduling Agreement" className="w-[441px]" />
                  <input aria-label="Purchase order" readOnly value="8660000004" className={`ml-[27px] h-[34px] w-[142px] border border-[#bfbfbf] bg-[#ebebeb] px-[5px] text-[26px] outline-none ${NUM}`} />
                  <input aria-label="PO item" className="ml-[14px] h-[34px] w-[77px] border border-[#bfbfbf] bg-[#ebebeb] outline-none" />
                  <button aria-label="Multiple selection" className={`${boxBtn} ml-[14px] h-9 w-[64px]`}><ExportIcon /></button>
                  <Select id="goods" label="Items shown" value="1 Goods/service items" className="ml-auto w-[402px]" />
                </div>
                <div className="mt-px flex justify-end pr-[27px]">
                  <label htmlFor="layout" className="flex w-[208px] items-center border-b border-[#bfbfbf] pt-0.5 pl-0.5">Layout</label>
                  <Select id="layout" value="7_6310 All information" className="w-[337px]" />
                </div>
                <ItemTable />
                <ItemToolbar />
              </section>
            </div>
            <VerificationDialog />
          </main>
          <div className="flex w-[26px] shrink-0 flex-col items-center pt-2 pr-px pb-2">
            <button aria-label="Scroll up" className="mt-0.5 mb-5"><ChevronUp /></button>
            <button aria-label="Scroll down" className="mb-[9px]"><ChevronDown /></button>
            <div className="flex w-[21px] flex-1 flex-col items-center justify-center gap-px bg-[#b6c0cb]">
              <span className="h-0.5 w-1 bg-white" /><span className="h-0.5 w-1 bg-white" /><span className="h-0.5 w-1 bg-white" />
            </div>
            <button aria-label="Line up" className="mt-[54px] mb-5"><ChevronUp /></button>
            <button aria-label="Line down"><ChevronDown /></button>
          </div>
        </div>
      </div>
      <StatusBar />
    </div>
  );
}
